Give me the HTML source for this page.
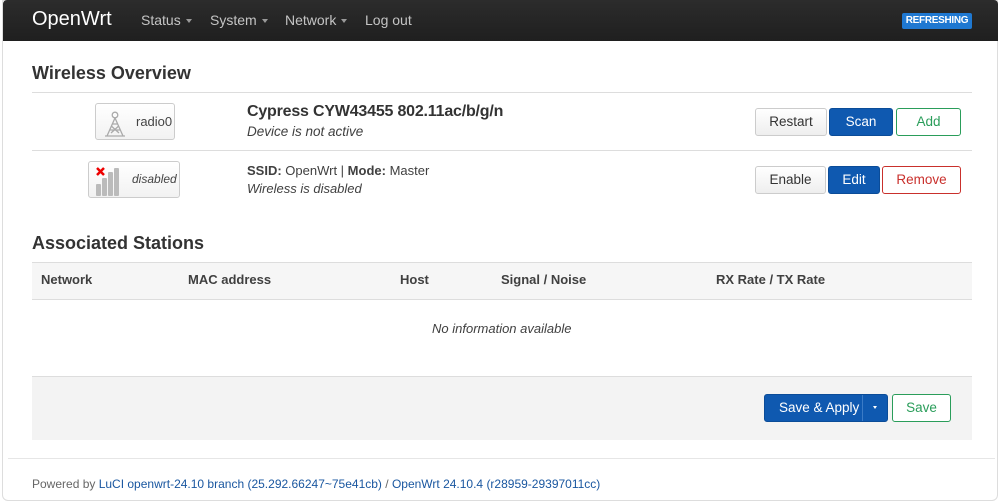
<!DOCTYPE html>
<html><head><meta charset="utf-8"><style>
*{box-sizing:border-box;margin:0;padding:0}
body{width:1000px;height:503px;background:#fff;font-family:"Liberation Sans",sans-serif;color:#404040;position:relative;overflow:hidden}
.a{position:absolute;white-space:nowrap}
.frame{position:absolute;left:2px;top:0;width:996px;height:501px;border:1px solid #ddd;border-radius:0 0 6px 6px}
.hdr{position:absolute;left:3px;top:0;width:995px;height:41px;background:linear-gradient(#2c2c2c,#1f1f1f);border-radius:4px 4px 0 0}
.nav{color:#c4c4c4;font-size:14px;top:12px}
.car{display:inline-block;border-top:4px solid #999;border-left:3.5px solid transparent;border-right:3.5px solid transparent;vertical-align:middle;margin-left:5px}
h2{position:absolute;font-size:18px;font-weight:bold;color:#333}
.hl{position:absolute;left:32px;width:940px;height:1px;background:#ddd}
.btn{position:absolute;height:28px;border-radius:3px;font-size:13.5px;text-align:center;line-height:26px;border:1px solid #ccc;background:linear-gradient(#fff,#eee);color:#333}
.pri{background:#0f59b0;border-color:#0b4c98;color:#fff}
.pos{background:#fff;border-color:#2a9d5a;color:#2a9d5a}
.neg{background:#fff;border-color:#c9302c;color:#c9302c}
.badge{position:absolute;border:1px solid #ccc;border-radius:3px;background:linear-gradient(#fff,#f2f2f2);font-size:12px;color:#444}
.th{top:272px;font-size:13px;font-weight:bold;color:#404040}
</style></head><body>
<div class="frame"></div>
<div class="hdr"></div>
<div class="a" style="left:32px;top:8px;color:#fff;font-size:20px">OpenWrt</div>
<div class="a nav" style="left:141px">Status<span class="car"></span></div>
<div class="a nav" style="left:210px">System<span class="car"></span></div>
<div class="a nav" style="left:285px">Network<span class="car"></span></div>
<div class="a nav" style="left:365px">Log out</div>
<div class="a" style="left:902px;top:13px;width:70px;height:16px;background:#1f78d1;color:#fff;font-size:10px;font-weight:bold;text-align:center;line-height:16px;border-radius:2px;letter-spacing:-0.3px">REFRESHING</div>

<h2 style="left:32px;top:63px">Wireless Overview</h2>
<div class="hl" style="top:92px"></div>
<div class="badge" style="left:95px;top:103px;width:80px;height:37px">
<svg class="a" style="left:7px;top:6px" width="24" height="27" viewBox="0 0 24 27" fill="none" stroke="#aaa" stroke-width="1.3"><circle cx="12" cy="5" r="2.8"/><path d="M12 8 L4 26 M12 8 L20 26 M6.5 20 L17.5 20 M9 14 L15 14 M8.3 16 L16 23 M15.7 16 L8 23 M2 26 L22 26"/></svg>
<span class="a" style="left:40px;top:10px;font-size:13px">radio0</span></div>
<div class="a" style="left:247px;top:103px;font-size:16px;font-weight:bold;color:#333;letter-spacing:-0.2px">Cypress CYW43455 802.11ac/b/g/n</div>
<div class="a" style="left:247px;top:124px;font-size:13.5px;font-style:italic">Device is not active</div>
<div class="btn" style="left:755px;top:108px;width:72px">Restart</div>
<div class="btn pri" style="left:829px;top:108px;width:64px">Scan</div>
<div class="btn pos" style="left:896px;top:108px;width:65px">Add</div>
<div class="hl" style="top:150px"></div>

<div class="badge" style="left:88px;top:161px;width:92px;height:37px">
<svg class="a" style="left:5px;top:3px" width="28" height="32" viewBox="0 0 28 32"><path d="M3 3 L10 10 M10 3 L3 10" stroke="#e00" stroke-width="2.5"/><g fill="#bbb"><rect x="2" y="19" width="5" height="12" rx="1"/><rect x="8" y="13" width="5" height="18" rx="1"/><rect x="14" y="7" width="5" height="24" rx="1"/><rect x="20" y="3" width="5" height="28" rx="1"/></g></svg>
<span class="a" style="left:43px;top:10px;font-size:12px;font-style:italic">disabled</span></div>
<div class="a" style="left:247px;top:163px;font-size:13px;color:#404040"><b>SSID:</b> OpenWrt | <b>Mode:</b> Master</div>
<div class="a" style="left:247px;top:181px;font-size:13px;font-style:italic">Wireless is disabled</div>
<div class="btn" style="left:755px;top:166px;width:71px">Enable</div>
<div class="btn pri" style="left:828px;top:166px;width:52px">Edit</div>
<div class="btn neg" style="left:882px;top:166px;width:79px">Remove</div>

<h2 style="left:32px;top:233px">Associated Stations</h2>
<div class="a" style="left:32px;top:262px;width:940px;height:38px;background:#f6f6f6;border-top:1px solid #ddd;border-bottom:1px solid #ddd"></div>
<div class="a th" style="left:41px">Network</div>
<div class="a th" style="left:188px">MAC address</div>
<div class="a th" style="left:400px">Host</div>
<div class="a th" style="left:501px">Signal / Noise</div>
<div class="a th" style="left:716px">RX Rate / TX Rate</div>
<div class="a" style="left:432px;top:321px;font-size:13px;font-style:italic">No information available</div>

<div class="a" style="left:32px;top:376px;width:940px;height:64px;background:#f3f3f3;border-top:1px solid #ddd"></div>
<div class="btn pri" style="left:764px;top:394px;width:124px;text-align:left;padding-left:14px">Save &amp; Apply<span class="a" style="left:97px;top:0;height:26px;border-left:1px solid #3b7bc6"></span><span class="a" style="left:108px;top:11px;border-top:3px solid #fff;border-left:2.5px solid transparent;border-right:2.5px solid transparent"></span></div>
<div class="btn pos" style="left:892px;top:394px;width:59px">Save</div>

<div class="a" style="left:8px;top:458px;width:987px;height:1px;background:#e6e6e6"></div>
<div class="a" style="left:32px;top:477px;font-size:12px;color:#666">Powered by <span style="color:#1a57a0">LuCI openwrt-24.10 branch (25.292.66247~75e41cb)</span> / <span style="color:#1a57a0">OpenWrt 24.10.4 (r28959-29397011cc)</span></div>
</body></html>
